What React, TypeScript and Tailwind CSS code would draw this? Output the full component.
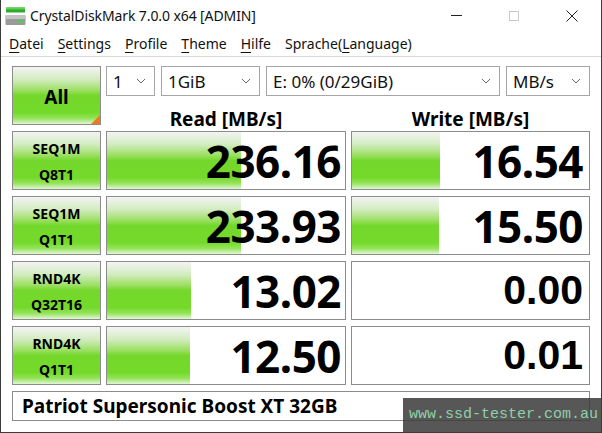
import React from 'react';

// ---------- Data ----------
interface Row {
  l1: string;
  l2: string;
  read: string;
  readBar: number; // px width of green bar
  write: string;
  writeBar: number;
  writeArial?: boolean;
}

const rows: Row[] = [
  { l1: 'SEQ1M', l2: 'Q8T1', read: '236.16', readBar: 134, write: '16.54', writeBar: 88 },
  { l1: 'SEQ1M', l2: 'Q1T1', read: '233.93', readBar: 134, write: '15.50', writeBar: 87 },
  { l1: 'RND4K', l2: 'Q32T16', read: '13.02', readBar: 84, write: '0.00', writeBar: 0, writeArial: true },
  { l1: 'RND4K', l2: 'Q1T1', read: '12.50', readBar: 83, write: '0.01', writeBar: 0, writeArial: true },
];

const menu = ['Datei', 'Settings', 'Profile', 'Theme', 'Hilfe', 'Sprache(Language)'];
const menuKeys = [0, 0, 0, 0, 0, 8];

const ui = "font-['Noto_Sans','Open_Sans',sans-serif]";

// green gradient used for buttons and bars
const greenGrad =
  'bg-[linear-gradient(to_bottom,#f4f4f4_0%,#d2ecc0_22%,#9fe066_40%,#74d82c_50%,#74da2a_80%,#95e35a_90%,#e2f6d6_100%)]';

// ---------- Small pieces ----------
const Chevron = () => (
  <svg width="10" height="6" viewBox="0 0 10 6" className="shrink-0">
    <path d="M1 1 L5 5 L9 1" fill="none" stroke="#6b6b6b" strokeWidth="1" />
  </svg>
);

const Combo = ({ text, w }: { text: string; w: string }) => (
  <div className={`${w} h-[30px] border border-[#a6a6a6] bg-white flex items-center justify-between pl-[6px] pr-[8px]`}>
    <span className="text-[17px] text-[#111] leading-none">{text}</span>
    <Chevron />
  </div>
);

const AppIcon = () => (
  <svg width="22" height="20" viewBox="0 0 22 20">
    <rect x="1" y="0.5" width="19" height="5" fill="#2fa82f" />
    <rect x="1" y="0.5" width="19" height="2" fill="#5fd24f" />
    <rect x="0.5" y="8" width="20" height="10" rx="1" fill="#9a9a9a" />
    <rect x="0.5" y="8" width="20" height="4" rx="1" fill="#c4c4c4" />
    <rect x="12" y="13" width="6" height="2.5" fill="#4fd04f" />
  </svg>
);

// ---------- Page ----------
export default function App() {
  return (
    <div className={`${ui} w-[602px] h-[433px] bg-white relative overflow-hidden border-x border-b border-[#3c3c3c] text-black`}>
      {/* title bar */}
      <div className="h-[31px] flex items-center">
        <div className="ml-[4px] mt-[2px]"><AppIcon /></div>
        <span className="ml-[3px] text-[14px] text-[#111] tracking-[-0.1px]">CrystalDiskMark 7.0.0 x64 [ADMIN]</span>
        <div className="ml-auto flex items-center">
          <div className="w-[58px] flex justify-center"><div className="w-[11px] h-px bg-[#222]" /></div>
          <div className="w-[58px] flex justify-center"><div className="w-[10px] h-[10px] border border-[#c8c8c8]" /></div>
          <div className="w-[58px] flex justify-center">
            <svg width="12" height="12" viewBox="0 0 12 12">
              <path d="M0.5 0.5 L11.5 11.5 M11.5 0.5 L0.5 11.5" stroke="#222" strokeWidth="1" />
            </svg>
          </div>
        </div>
      </div>

      {/* menu bar */}
      <div className="h-[26px] flex items-center pl-[8px] gap-[14px] text-[14px] text-[#111] border-b border-[#d9d9d9]">
        {menu.map((m, i) => (
          <span key={m}>
            {m.slice(0, menuKeys[i])}
            <span className="underline underline-offset-[3px] decoration-1">{m[menuKeys[i]]}</span>
            {m.slice(menuKeys[i] + 1)}
          </span>
        ))}
      </div>

      {/* content grid */}
      <div className="pl-[11px] pt-[9px] grid grid-cols-[89px_240px_239px] gap-x-[5px] gap-y-[6px] auto-rows-[59px]">
        {/* All button */}
        <div className={`relative border border-[#8c8c8c] ${greenGrad} flex items-center justify-center`}>
          <span className="text-[19px] font-bold mt-[3px]">All</span>
          <div className="absolute right-0 bottom-0 w-0 h-0 border-l-[9px] border-l-transparent border-b-[9px] border-b-[#f07a1c]" />
        </div>

        {/* combos + column headers */}
        <div className="col-span-2 flex flex-col">
          <div className="flex gap-[6px]">
            <Combo text="1" w="w-[49px]" />
            <Combo text="1GiB" w="w-[99px]" />
            <Combo text="E: 0% (0/29GiB)" w="w-[234px]" />
            <Combo text="MB/s" w="w-[84px]" />
          </div>
          <div className="flex flex-1 items-end mb-[-6px]">
            <div className="w-[240px] text-center text-[19px] font-bold leading-[24px]">Read [MB/s]</div>
            <div className="w-[5px]" />
            <div className="w-[239px] text-center text-[19px] font-bold leading-[24px]">Write [MB/s]</div>
          </div>
        </div>

        {rows.map((r, i) => (
          <React.Fragment key={i}>
            <div className={`border border-[#8c8c8c] ${greenGrad} flex flex-col items-center justify-center gap-[12px] pt-[2px] text-[14px] font-bold leading-none`}>
              <span>{r.l1}</span>
              <span>{r.l2}</span>
            </div>
            <div className="relative border border-[#8c8c8c] bg-white flex items-center justify-end pr-[4px]">
              <div className={`absolute left-0 top-0 bottom-0 ${greenGrad}`} style={{ width: r.readBar }} />
              <span className="relative text-[44px] font-bold leading-none tracking-[-0.5px]">{r.read}</span>
            </div>
            <div className="relative border border-[#8c8c8c] bg-white flex items-center justify-end pr-[6px]">
              {r.writeBar > 0 && (
                <div className={`absolute left-0 top-0 bottom-0 ${greenGrad}`} style={{ width: r.writeBar }} />
              )}
              {r.writeArial ? (
                <span className="relative font-['Liberation_Sans',Arial,sans-serif] text-[41px] font-bold leading-none">{r.write}</span>
              ) : (
                <span className="relative text-[44px] font-bold leading-none tracking-[-0.5px]">{r.write}</span>
              )}
            </div>
          </React.Fragment>
        ))}

        {/* drive name */}
        <div className="col-span-3 h-[30px] border border-[#8c8c8c] bg-white flex items-center pl-[9px]">
          <span className="text-[19px] font-bold leading-none">Patriot Supersonic Boost XT 32GB</span>
        </div>
      </div>

      {/* watermark */}
      <div className="absolute left-[402px] top-[398px] w-[200px] h-[35px] bg-[#3a3a3a]/85 flex items-center pl-[6px]">
        <span className="font-['Liberation_Mono','DejaVu_Sans_Mono',monospace] text-[15px] text-[#8fd0a8]">www.ssd-tester.com.au</span>
      </div>
    </div>
  );
}
